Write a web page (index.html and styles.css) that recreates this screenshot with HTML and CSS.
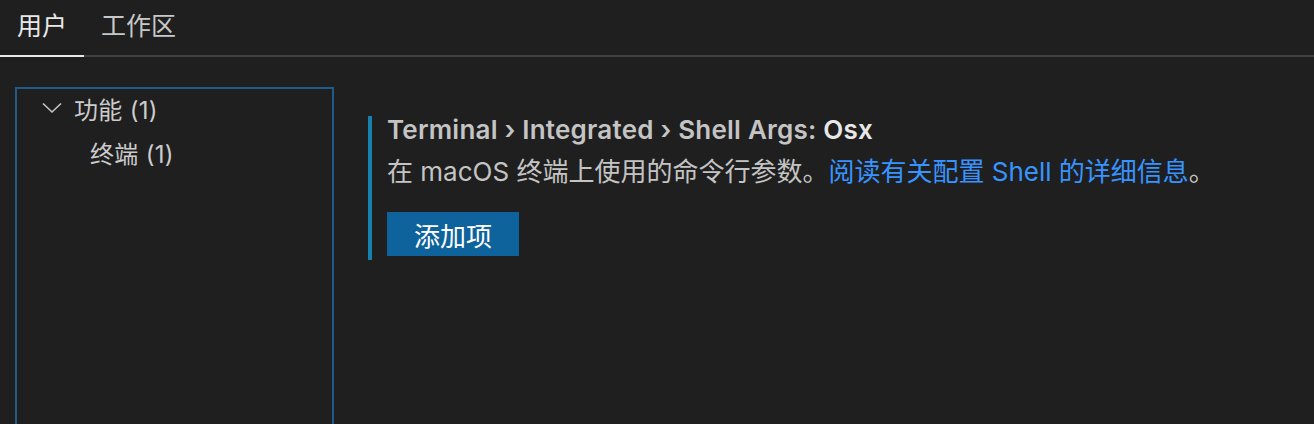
FILE: index.html
```html
<!DOCTYPE html>
<html lang="zh-CN">
<head>
  <meta charset="UTF-8">
  <title>设置</title>
  <link rel="stylesheet" href="styles.css">
</head>
<body>

  <div class="tabs">
    <div class="tab active">用户</div>
    <div class="tab">工作区</div>
  </div>

  <div class="content">
    <div class="toc">
      <div class="toc-row group">
        <svg class="chevron" width="20" height="12" viewBox="0 0 20 12"><path d="M1 1.5 L10 10 L19 1.5" fill="none" stroke="#c5c5c5" stroke-width="1.6"/></svg>
        <span>功能 (1)</span>
      </div>
      <div class="toc-row child">终端 (1)</div>
    </div>

    <div class="settings">
      <div class="setting-item">
        <div class="setting-title"><span class="category">Terminal › Integrated › Shell Args: </span><span class="label">Osx</span></div>
        <div class="setting-desc">在 macOS 终端上使用的命令行参数。<a href="#">阅读有关配置 Shell 的详细信息</a>。</div>
        <button class="add-btn">添加项</button>
      </div>
    </div>
  </div>

</body>
</html>
```

FILE: styles.css
```css
body { margin: 0; height: 424px; background: #1f1f1f; color: #cccccc; font-family: "Inter", "Noto Sans CJK SC", sans-serif; overflow: hidden; }

.tabs { display: flex; height: 55px; border-bottom: 2px solid #414141; }
.tab { padding: 0 17px 0 17px; font-size: 25px; line-height: 52px; color: #c8c8c8; }
.tab.active { color: #e8e8e8; border-bottom: 2px solid #e8e8e8; margin-bottom: -2px; padding-right: 17px; }

.content { display: flex; padding-top: 30px; }

.toc { margin-left: 15px; width: 315px; height: 335px; border: 2px solid #1f5b8a; border-bottom: none; }
.toc-row { height: 44px; display: flex; align-items: center; font-size: 24px; letter-spacing: 0.3px; color: #cccccc; }
.toc-row.group { margin-top: -3px; padding-left: 25px; }
.chevron { margin-right: 12px; }
.toc-row.child { padding-left: 73px; }

.settings { margin-left: 34px; margin-top: 29px; }
.setting-item { border-left: 4px solid #1581ad; padding: 0 0 4px 15px; }
.setting-title { font-size: 26px; line-height: 28px; font-weight: 600; letter-spacing: 0.22px; }
.category { color: #c4c4c4; }
.label { color: #e8e8e8; }
.setting-desc { margin-top: 14px; font-size: 26px; line-height: 28px; color: #c4c4c4; }
.setting-desc a { color: #3794ff; text-decoration: none; }
.add-btn { margin-top: 26px; height: 44px; padding: 0 27px; border: none; background: #0e639c; color: #ffffff; font-family: inherit; font-size: 26px; }
```
